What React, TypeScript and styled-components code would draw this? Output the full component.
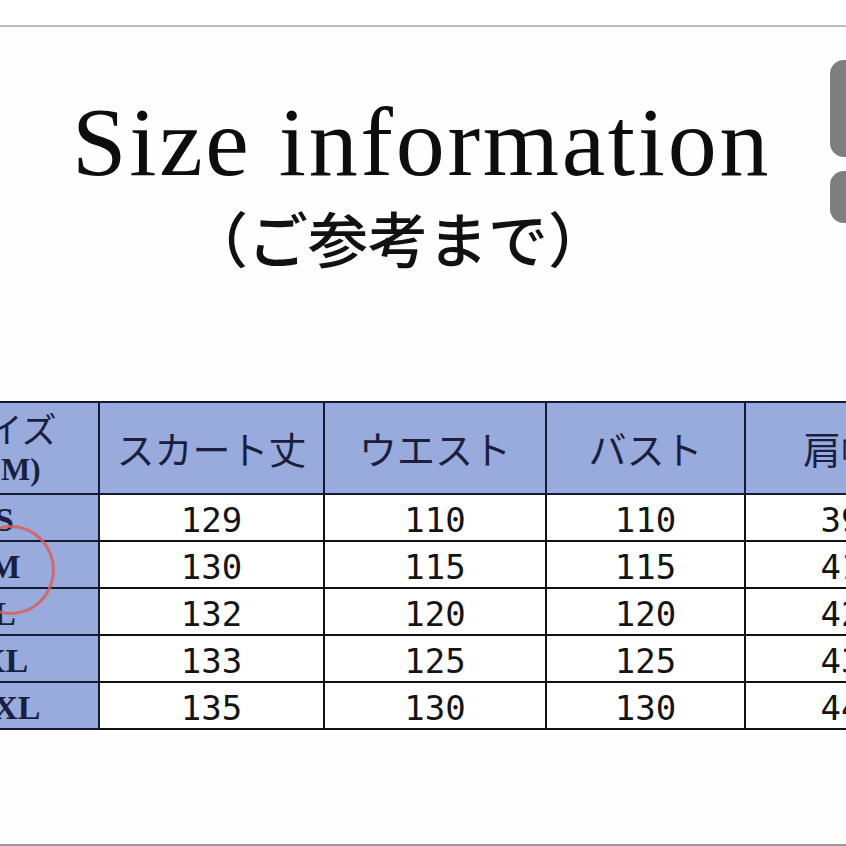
import React from 'react';
import styled, { createGlobalStyle } from 'styled-components';

const GlobalStyle = createGlobalStyle`
  html, body {
    margin: 0;
    padding: 0;
    background: #ffffff;
    overflow: hidden;
  }
`;

const Page = styled.div`
  display: flex;
  flex-direction: column;
  width: 846px;
  height: 846px;
  overflow: hidden;
  background: #fefefe;
`;

const TopBar = styled.div`
  height: 25px;
  flex-shrink: 0;
  background: #ffffff;
  border-bottom: 2px solid #bdbdbd;
`;

const Content = styled.div`
  flex: 1;
  display: flex;
  flex-direction: column;
  border-bottom: 2px solid #9a9a9a;
`;

const HeaderRow = styled.div`
  display: flex;
  align-items: flex-start;
`;

const TitleBlock = styled.div`
  flex: 1;
  display: flex;
  flex-direction: column;
`;

const Title = styled.h1`
  margin: 66px 0 0 0;
  padding-left: 72px;
  font-family: 'Liberation Serif', 'Times New Roman', serif;
  font-weight: 400;
  font-size: 98px;
  line-height: 98px;
  letter-spacing: 2.7px;
  color: #0d0d0d;
  white-space: nowrap;
`;

const Subtitle = styled.div`
  margin-top: 16px;
  padding-left: 188px;
  font-family: 'Noto Sans CJK JP', sans-serif;
  font-weight: 500;
  font-size: 60px;
  line-height: 60px;
  color: #111111;
  white-space: nowrap;
`;

const TabStack = styled.div`
  display: flex;
  flex-direction: column;
  gap: 14px;
  width: 16px;
  padding-top: 33px;
`;

const Tab = styled.div<{ $h: number }>`
  height: ${(p) => p.$h}px;
  background: #7f7f7f;
  border-radius: 14px 0 0 14px;
`;

const TableWrap = styled.div`
  position: relative;
  margin-top: 134px;
  margin-left: -91px;
`;

const Table = styled.table`
  border-collapse: collapse;
  table-layout: fixed;
  width: 1017px;
`;

const HeadCell = styled.th<{ $w: number }>`
  width: ${(p) => p.$w}px;
  height: 90px;
  padding: 0;
  background: #98abdc;
  border: 2px solid #141a33;
  font-family: 'Noto Sans CJK JP', sans-serif;
  font-weight: 400;
  font-size: 38px;
  line-height: 1.2;
  color: #1a1f3f;
  text-align: center;
  vertical-align: middle;
`;

const SizeHeadText = styled.span`
  display: block;
  font-size: 35px;
  line-height: 44px;
`;

const UnitLabel = styled.span`
  display: block;
  font-family: 'Liberation Serif', serif;
  font-weight: 700;
  font-size: 31px;
  line-height: 40px;
`;

const SizeCell = styled.td`
  height: 41px;
  padding: 4px 0 0 0;
  background: #98abdc;
  border: 2px solid #141a33;
  font-family: 'Liberation Serif', serif;
  font-weight: 700;
  font-size: 34px;
  line-height: 1;
  color: #1a1f3f;
  text-align: center;
`;

const ValueCell = styled.td`
  height: 41px;
  padding: 4px 0 0 0;
  background: #ffffff;
  border: 2px solid #111111;
  font-family: 'DejaVu Sans Mono', monospace;
  font-size: 34px;
  line-height: 1;
  color: #141414;
  text-align: center;
`;

const RedCircle = styled.div`
  position: absolute;
  left: 58px;
  top: 124px;
  width: 88px;
  height: 90px;
  border: 3px solid rgba(214, 96, 92, 0.85);
  border-radius: 50%;
  box-sizing: border-box;
  pointer-events: none;
`;

const headers = [
  { key: 'size', label: 'サイズ', w: 187 },
  { key: 'skirt', label: 'スカート丈', w: 223 },
  { key: 'waist', label: 'ウエスト', w: 220 },
  { key: 'bust', label: 'バスト', w: 197 },
  { key: 'shoulder', label: '肩幅', w: 190 },
];

const rows = [
  { size: 'S', values: [129, 110, 110, 39] },
  { size: 'M', values: [130, 115, 115, 41] },
  { size: 'L', values: [132, 120, 120, 42] },
  { size: 'XL', values: [133, 125, 125, 43] },
  { size: 'XXL', values: [135, 130, 130, 44] },
];

export default function App() {
  return (
    <Page>
      <GlobalStyle />
      <TopBar />
      <Content>
        <HeaderRow>
          <TitleBlock>
            <Title>Size information</Title>
            <Subtitle>（ご参考まで）</Subtitle>
          </TitleBlock>
          <TabStack>
            <Tab $h={97} />
            <Tab $h={52} />
          </TabStack>
        </HeaderRow>
        <TableWrap>
          <Table>
            <thead>
              <tr>
                {headers.map((h) =>
                  h.key === 'size' ? (
                    <HeadCell key={h.key} $w={h.w}>
                      <SizeHeadText>{h.label}</SizeHeadText>
                      <UnitLabel>(CM)</UnitLabel>
                    </HeadCell>
                  ) : (
                    <HeadCell key={h.key} $w={h.w}>
                      {h.label}
                    </HeadCell>
                  )
                )}
              </tr>
            </thead>
            <tbody>
              {rows.map((r) => (
                <tr key={r.size}>
                  <SizeCell>{r.size}</SizeCell>
                  {r.values.map((v, i) => (
                    <ValueCell key={i}>{v}</ValueCell>
                  ))}
                </tr>
              ))}
            </tbody>
          </Table>
          <RedCircle />
        </TableWrap>
      </Content>
    </Page>
  );
}
